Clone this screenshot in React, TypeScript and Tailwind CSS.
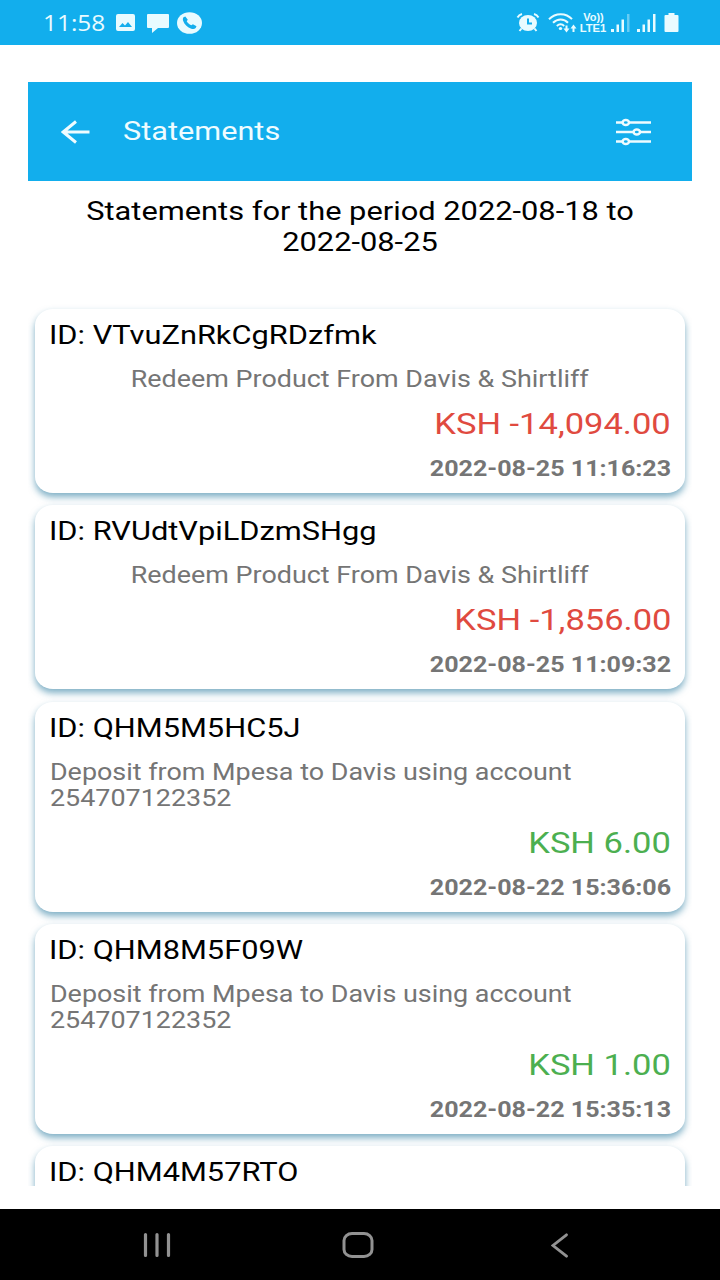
interface Statement {
  id: string;
  description?: string;
  amount?: string;
  date?: string;
  credit: boolean;
}

const statements: Statement[] = [
  {
    id: 'VTvuZnRkCgRDzfmk',
    description: 'Redeem Product From Davis & Shirtliff',
    amount: '-14,094.00',
    date: '2022-08-25 11:16:23',
    credit: false,
  },
  {
    id: 'RVUdtVpiLDzmSHgg',
    description: 'Redeem Product From Davis & Shirtliff',
    amount: '-1,856.00',
    date: '2022-08-25 11:09:32',
    credit: false,
  },
  {
    id: 'QHM5M5HC5J',
    description: 'Deposit from Mpesa to Davis using account 254707122352',
    amount: '6.00',
    date: '2022-08-22 15:36:06',
    credit: true,
  },
  {
    id: 'QHM8M5F09W',
    description: 'Deposit from Mpesa to Davis using account 254707122352',
    amount: '1.00',
    date: '2022-08-22 15:35:13',
    credit: true,
  },
  {
    id: 'QHM4M57RTO',
    credit: true,
  },
];

function StatusBar() {
  return (
    <div className="flex h-[45px] shrink-0 items-center justify-between bg-[#12aeed] pl-[43px] pr-[41px] text-[#e8fbff]">
      <div className="flex items-center">
        <span className="w-[73px] font-['Open_Sans',sans-serif] text-[22px] leading-[45px]">
          <span className="inline-block origin-left scale-x-[1.11]">11:58</span>
        </span>
        <svg width="19" height="17" viewBox="0 0 19 17" fill="currentColor">
          <path
            fillRule="evenodd"
            d="M2 0h15a2 2 0 0 1 2 2v13a2 2 0 0 1-2 2H2a2 2 0 0 1-2-2V2a2 2 0 0 1 2-2Zm1 13h13l-4-5-3 3.500-2.500-2.500Z"
          />
        </svg>
        <svg className="ml-3 mt-0.5" width="22" height="19" viewBox="0 0 22 19" fill="currentColor">
          <path d="M1 0h20a1 1 0 0 1 1 1v12a1 1 0 0 1-1 1H11l-6 5v-5H1a1 1 0 0 1-1-1V1a1 1 0 0 1 1-1Z" />
        </svg>
        <svg className="ml-2" width="25" height="22" viewBox="0 0 25 22">
          <ellipse cx="12.500" cy="11" rx="12.500" ry="10.800" fill="currentColor" />
          <path
            d="M6.500 5.200 8.300 4.400 10.800 7.700 9.700 9.200c1 1.900 2.400 3.100 4.600 4l1.600-1 3.600 2-.8 1.900c-1.200 1.100-3 1.100-5 .3C10.200 15.100 7.500 12.700 6.200 9c-.5-1.500-.4-2.800.3-3.800Z"
            fill="#12aeed"
          />
        </svg>
      </div>
      <div className="flex items-center">
        <svg width="24" height="19" viewBox="0 0 24 19" fill="none" stroke="currentColor">
          <ellipse cx="12" cy="10" rx="9" ry="8" fill="currentColor" stroke="none" />
          <path d="M1.500 4.500Q3 1.800 6 1M22.500 4.500Q21 1.800 18 1M5.500 15.500 3.500 18M18.500 15.500l2 2.500" strokeWidth="2" />
          <path d="M12 5.500V10.500H16" stroke="#12aeed" strokeWidth="2" />
        </svg>
        <svg className="ml-2" width="29" height="20" viewBox="0 0 29 20" fill="none" stroke="currentColor">
          <path d="M1 6.200C7.500-.5 18-.5 24 6.200M5 9.800c4.500-4.300 11-4.300 15 0M8.800 13c2.300-2 5.300-2 7.400 0" strokeWidth="2" />
          <ellipse cx="12.500" cy="15.500" rx="1.700" ry="1.500" fill="currentColor" stroke="none" />
          <path d="M18.500 12.500V17M25.500 19v-5" strokeWidth="2" />
          <path d="M15.500 15.500h6l-3 4ZM22.500 15.500h6l-3-4Z" fill="currentColor" stroke="none" />
        </svg>
        <span className="ml-[3px] flex w-[27px] flex-col items-center font-['Liberation_Sans',sans-serif] text-[11px] font-bold leading-[11px]">
          <span>Vo))</span>
          <span className="scale-x-[1.02]">LTE1</span>
        </span>
        <svg className="ml-1" width="20" height="18" viewBox="0 0 20 18" fill="currentColor">
          <path d="M0 15h3v3H0ZM5.500 10.500H8V18H5.500ZM10.500 5.500H13V18h-2.500Z" />
          <path d="M16 0h2.500v18H16Z" opacity="0.4" />
        </svg>
        <svg className="ml-[6px]" width="20" height="18" viewBox="0 0 20 18" fill="currentColor">
          <path d="M0 15h3v3H0ZM5.500 10.500H8V18H5.500ZM10.500 5.500H13V18h-2.500ZM16 0h2.500v18H16Z" />
        </svg>
        <svg className="ml-[7px]" width="15" height="19" viewBox="0 0 15 19" fill="currentColor">
          <path d="M4.500 0h6v2H13.500a1 1 0 0 1 1 1v15a1 1 0 0 1-1 1h-12a1 1 0 0 1-1-1V3a1 1 0 0 1 1-1h3Z" />
        </svg>
      </div>
    </div>
  );
}

function Header() {
  return (
    <header className="flex h-[99px] shrink-0 items-center bg-[#12aeed] pl-[33px] pr-[41px] text-[#effcff]">
      <svg width="30" height="24" viewBox="0 0 30 24" fill="none" stroke="currentColor" strokeWidth="3">
        <path d="M28.500 12H3M15 1.500 2.200 12 15 22.500" />
      </svg>
      <h1 className="mb-px ml-8 origin-left scale-x-[1.18] text-[26px] leading-[30px]">Statements</h1>
      <svg className="ml-auto" width="36" height="28" viewBox="0 0 36 28" fill="none" stroke="currentColor" strokeWidth="2.500">
        <path d="M1 4.500h6.500M14 4.500h22M1 14h17.500M25 14h11M1 23.500h6.500M14 23.500h22" />
        <ellipse cx="10.800" cy="4.500" rx="3.200" ry="2.600" />
        <ellipse cx="21.800" cy="14" rx="3.200" ry="2.600" />
        <ellipse cx="10.800" cy="23.500" rx="3.200" ry="2.600" />
      </svg>
    </header>
  );
}

function StatementCard({ statement }: { statement: Statement }) {
  return (
    <div className="flex min-h-[184px] shrink-0 flex-col rounded-[18px/16px] bg-white px-[14px] pb-3 pt-[11px] shadow-[0_4px_7px_rgba(20,110,150,0.55)]">
      <p className="origin-left scale-x-[1.184] self-start text-[26px] leading-[30px] text-black">ID: {statement.id}</p>
      {statement.description && (
        <p className="mt-[17px] max-w-[530px] scale-x-[1.17] self-center text-[23px] leading-[26px] text-[#757575]">
          {statement.description}
        </p>
      )}
      {statement.amount && (
        <p
          className={`mt-[15px] origin-right scale-x-[1.19] self-end text-[29px] leading-8 ${
            statement.credit ? 'text-[#4caf50]' : 'text-[#e04a3f]'
          }`}
        >
          KSH {statement.amount}
        </p>
      )}
      {statement.date && (
        <p className="mt-4 origin-right scale-x-[1.165] self-end text-[21.500px] font-bold leading-[25px] text-[#757575]">
          {statement.date}
        </p>
      )}
    </div>
  );
}

function NavBar() {
  return (
    <nav className="flex h-[71px] shrink-0 items-center bg-black pl-[143px] pt-px">
      <svg width="28" height="24" viewBox="0 0 28 24" stroke="#929292" strokeWidth="3.200" strokeLinecap="round">
        <path d="M2.500 1.600v20.800M14 1.600v20.800M25.500 1.600v20.800" />
      </svg>
      <svg className="ml-[171px]" width="32" height="26" viewBox="0 0 32 26" fill="none" stroke="#929292" strokeWidth="3">
        <rect x="2" y="1.500" width="28" height="23" rx="8" ry="7" />
      </svg>
      <svg className="ml-[177px]" width="18" height="25" viewBox="0 0 18 25" fill="none" stroke="#929292" strokeWidth="2.800" strokeLinecap="round">
        <path d="M15.500 1.800 2 12.500l13.500 10.700" />
      </svg>
    </nav>
  );
}

export default function App() {
  return (
    <div className="flex h-[1280px] w-[720px] flex-col overflow-hidden bg-white font-[Roboto,sans-serif]">
      <StatusBar />
      <main className="flex min-h-0 flex-1 flex-col px-7 pb-[23px] pt-[37px]">
        <Header />
        <h2 className="mt-[15px] w-[480px] shrink-0 scale-x-[1.185] self-center text-center text-[26px] leading-[31px] text-black">
          Statements for the period 2022-08-18 to 2022-08-25
        </h2>
        <div className="mt-[43px] flex min-h-0 flex-1 flex-col gap-[12.300px] overflow-hidden px-[7px] pt-2">
          {statements.map((statement) => (
            <StatementCard key={statement.id} statement={statement} />
          ))}
        </div>
      </main>
      <NavBar />
    </div>
  );
}
